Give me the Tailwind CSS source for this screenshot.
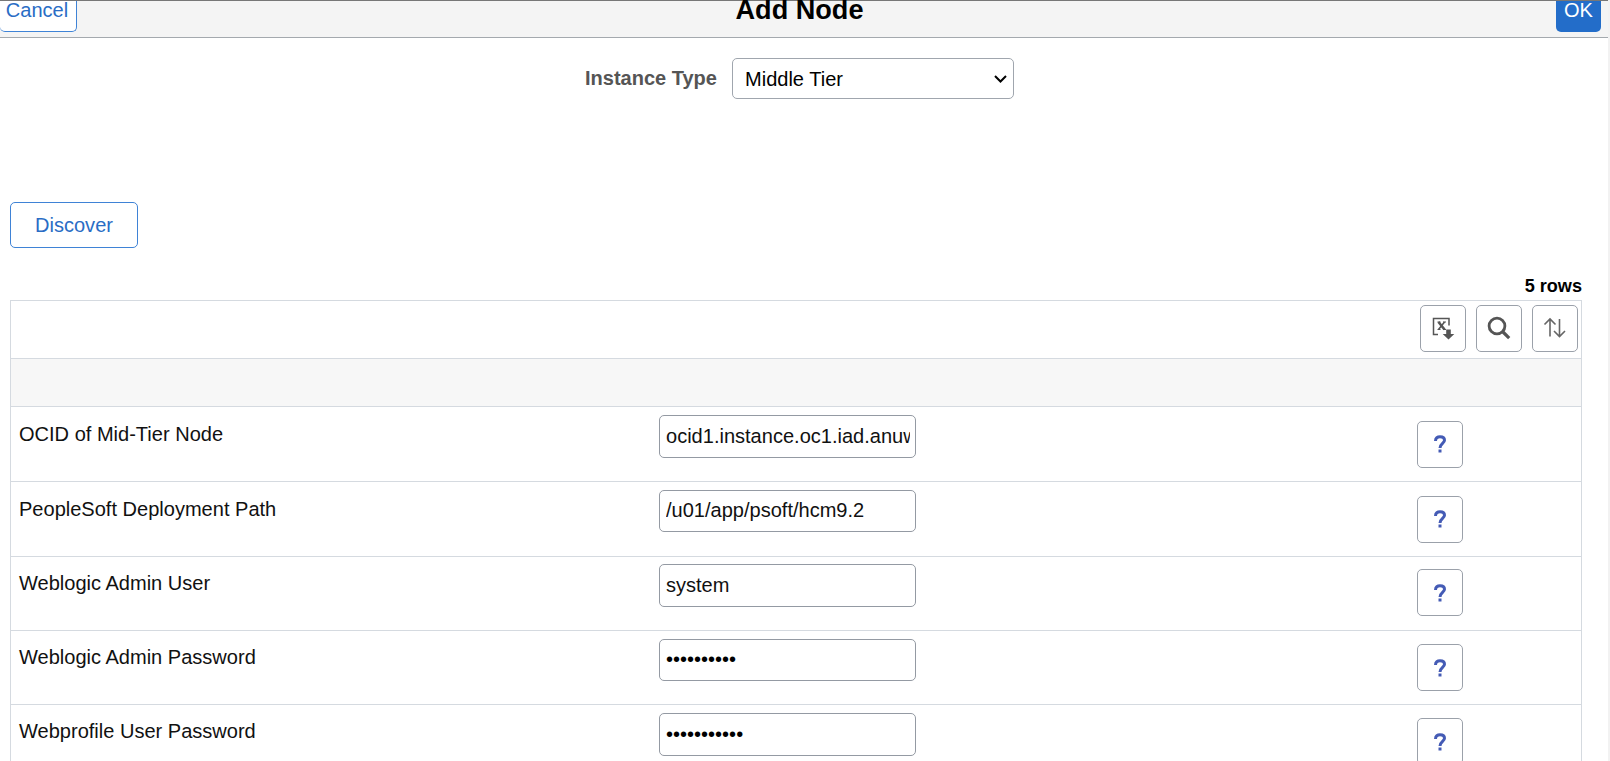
<!DOCTYPE html>
<html lang="en">
<head>
<meta charset="utf-8">
<title>Add Node</title>
<script src="https://cdn.jsdelivr.net/npm/@tailwindcss/browser@4"></script>
</head>
<body class="h-[761px] w-[1610px] overflow-hidden bg-white font-['Liberation_Sans',Arial,sans-serif] text-[20.05px] leading-6 text-[#111]">
<div class="flex h-[761px] flex-col overflow-hidden border-r-2 border-[#f2f2f2]">
  <header class="flex h-[38px] shrink-0 items-start justify-between border-t border-b border-t-[#777] border-b-[#a4a9ae] bg-[#f4f4f4]">
    <div class="flex-1"><button class="block h-[31px] w-[77px] rounded-b-[5px] border border-t-0 border-l-0 border-[#3f83d6] bg-white pr-[2px] pb-[12px] text-center leading-[18px] text-[#2a6dc5]">Cancel</button></div>
    <h1 class="-mt-[5px] -translate-x-px text-[27.1px] leading-7 font-bold text-black">Add Node</h1>
    <div class="flex flex-1 justify-end pr-[7px]"><button class="block h-[31px] w-[45px] rounded-b-[5px] bg-[#236dc9] pb-[14px] text-center leading-[18px] text-white">OK</button></div>
  </header>

  <div class="mt-[20px] ml-[585px] flex h-[41px] shrink-0 items-center">
    <label class="w-[147px] pb-[2px] text-[20px] font-bold text-[#555]">Instance Type</label>
    <div class="flex h-[41px] w-[282px] items-center justify-between rounded-[5px] border border-[#a0a6ae] pr-[6px] pl-[12px] text-black">
      <span>Middle Tier</span>
      <svg class="h-[8px] w-[13px]" viewBox="0 0 13 8" fill="none" stroke="#000" stroke-width="2"><path d="M1 1l5.5 5.5L12 1"/></svg>
    </div>
  </div>

  <button class="mt-[103px] ml-[10px] h-[46px] w-[128px] shrink-0 rounded-[5px] border border-[#3f83d6] pb-[1px] text-[#2a6dc5]">Discover</button>

  <div class="mt-[25px] mr-[26px] flex h-[27px] shrink-0 items-center justify-end pb-px text-[18.1px] font-bold text-black">5 rows</div>

  <section class="mr-[26px] ml-[10px] grow border border-[#d5dae0]">
    <div class="flex h-[58px] justify-end gap-[10px] border-b border-[#d5dae0] pt-[4px] pr-[3px]">
      <button class="flex h-[47px] w-[46px] items-center justify-center rounded-[5px] border border-[#9ba1aa] pb-px">
        <svg class="size-[24px]" viewBox="0 0 24 24" fill="none" stroke="#555">
          <path d="M7 18.500H2.500V2.500H18v7" stroke-width="1.500"/><path d="M7.500 6l6 7.500" stroke-width="2.600"/><path d="M13.500 6l-6 7.500" stroke-width="1.600"/>
          <path d="M6.500 13.500h3M12 13.500h3M6.500 6h3M12 6h3" stroke-width="1.200"/>
          <path d="M15.200 13.500h4.600v4.500h3.500l-5.800 5.500-5.800-5.500h3.500z" fill="#555" stroke="none"/>
        </svg>
      </button>
      <button class="flex h-[47px] w-[46px] items-center justify-center rounded-[5px] border border-[#9ba1aa] pb-px">
        <svg class="size-[24px]" viewBox="0 0 24 24" fill="none" stroke="#555"><circle cx="10" cy="10" r="7.900" stroke-width="2.800"/><path d="M15.500 15.500l6.700 6.700" stroke-width="3.200"/></svg>
      </button>
      <button class="flex h-[47px] w-[46px] items-center justify-center rounded-[5px] border border-[#9ba1aa] pb-px">
        <svg class="size-[24px]" viewBox="0 0 24 24" fill="none" stroke="#666" stroke-width="1.600"><path d="M7 20.500V3M1.500 8.500L7 3l5.500 5.500M16.500 3v17.500M11 15l5.500 5.500L22 15"/></svg>
      </button>
    </div>
    <div class="h-[48px] border-b border-[#d5dae0] bg-[#f7f7f7]"></div>

    <div class="flex h-[75px] border-b border-[#d5dae0]">
      <div class="w-[648px] pt-[15px] pl-[8px]">OCID of Mid-Tier Node</div>
      <input class="mt-[8px] h-[43px] w-[257px] rounded-[5px] border border-[#949aa3] pr-[5px] pl-[6px] pb-[1px]" value="ocid1.instance.oc1.iad.anuwcljt" readonly>
      <button class="mt-[14px] ml-[501px] flex h-[47px] w-[46px] items-center justify-center rounded-[5px] border border-[#9ba1aa] pb-px"><svg class="h-[18px] w-[12px]" viewBox="0 0 12 18" fill="none" stroke="#445bb5" stroke-width="3"><path d="M1.500 6C1.500 3 3.500 1.800 6 1.800s4.500 1.200 4.500 3.500C10.500 8.300 6 8.600 6 13"/><path d="M6 14.500v3" stroke-width="3"/></svg></button>
    </div>
    <div class="flex h-[75px] border-b border-[#d5dae0]">
      <div class="w-[648px] pt-[15px] pl-[8px]">PeopleSoft Deployment Path</div>
      <input class="mt-[8px] h-[42px] w-[257px] rounded-[5px] border border-[#949aa3] pr-[5px] pl-[6px] pb-[1px]" value="/u01/app/psoft/hcm9.2" readonly>
      <button class="mt-[14px] ml-[501px] flex h-[47px] w-[46px] items-center justify-center rounded-[5px] border border-[#9ba1aa] pb-px"><svg class="h-[18px] w-[12px]" viewBox="0 0 12 18" fill="none" stroke="#445bb5" stroke-width="3"><path d="M1.500 6C1.500 3 3.500 1.800 6 1.800s4.500 1.200 4.500 3.500C10.500 8.300 6 8.600 6 13"/><path d="M6 14.500v3" stroke-width="3"/></svg></button>
    </div>
    <div class="flex h-[74px] border-b border-[#d5dae0]">
      <div class="w-[648px] pt-[14px] pl-[8px]">Weblogic Admin User</div>
      <input class="mt-[7px] h-[43px] w-[257px] rounded-[5px] border border-[#949aa3] pr-[5px] pl-[6px] pb-[1px]" value="system" readonly>
      <button class="mt-[12px] ml-[501px] flex h-[47px] w-[46px] items-center justify-center rounded-[5px] border border-[#9ba1aa]"><svg class="h-[18px] w-[12px]" viewBox="0 0 12 18" fill="none" stroke="#445bb5" stroke-width="3"><path d="M1.500 6C1.500 3 3.500 1.800 6 1.800s4.500 1.200 4.500 3.500C10.500 8.300 6 8.600 6 13"/><path d="M6 14.500v3" stroke-width="3"/></svg></button>
    </div>
    <div class="flex h-[74px] border-b border-[#d5dae0]">
      <div class="w-[648px] pt-[14px] pl-[8px]">Weblogic Admin Password</div>
      <input type="password" class="mt-[8px] h-[42px] w-[257px] rounded-[5px] border border-[#949aa3] pr-[5px] pl-[6px] pb-[1px] text-black" value="aaaaaaaaaa" readonly>
      <button class="mt-[13px] ml-[501px] flex h-[47px] w-[46px] items-center justify-center rounded-[5px] border border-[#9ba1aa]"><svg class="h-[18px] w-[12px]" viewBox="0 0 12 18" fill="none" stroke="#445bb5" stroke-width="3"><path d="M1.500 6C1.500 3 3.500 1.800 6 1.800s4.500 1.200 4.500 3.500C10.500 8.300 6 8.600 6 13"/><path d="M6 14.500v3" stroke-width="3"/></svg></button>
    </div>
    <div class="flex h-[75px]">
      <div class="w-[648px] pt-[14px] pl-[8px]">Webprofile User Password</div>
      <input type="password" class="mt-[8px] h-[43px] w-[257px] rounded-[5px] border border-[#949aa3] pr-[5px] pl-[6px] pb-[1px] text-black" value="aaaaaaaaaaa" readonly>
      <button class="mt-[13px] ml-[501px] flex h-[47px] w-[46px] items-center justify-center rounded-[5px] border border-[#9ba1aa]"><svg class="h-[18px] w-[12px]" viewBox="0 0 12 18" fill="none" stroke="#445bb5" stroke-width="3"><path d="M1.500 6C1.500 3 3.500 1.800 6 1.800s4.500 1.200 4.500 3.500C10.500 8.300 6 8.600 6 13"/><path d="M6 14.500v3" stroke-width="3"/></svg></button>
    </div>
  </section>
</div>
</body>
</html>
